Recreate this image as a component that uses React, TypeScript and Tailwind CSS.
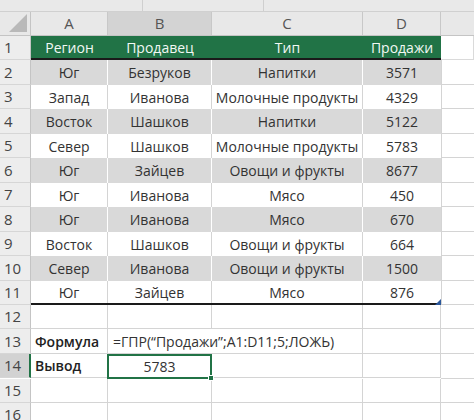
import React from 'react';

const COLS = [77, 104, 151, 78];
const ROW_H = [24, 25, 24, 25, 24, 25, 24, 25, 24, 25, 24, 24, 25, 24, 24, 24];

const DATA: string[][] = [
  ['Юг', 'Безруков', 'Напитки', '3571'],
  ['Запад', 'Иванова', 'Молочные продукты', '4329'],
  ['Восток', 'Шашков', 'Напитки', '5122'],
  ['Север', 'Шашков', 'Молочные продукты', '5783'],
  ['Юг', 'Зайцев', 'Овощи и фрукты', '8677'],
  ['Юг', 'Иванова', 'Мясо', '450'],
  ['Юг', 'Иванова', 'Мясо', '670'],
  ['Восток', 'Шашков', 'Овощи и фрукты', '664'],
  ['Север', 'Иванова', 'Овощи и фрукты', '1500'],
  ['Юг', 'Зайцев', 'Мясо', '876'],
];

const HEAD = ['Регион', 'Продавец', 'Тип', 'Продажи'];

function RowHeader({ n, h, active }: { n: number; h: number; active?: boolean }) {
  return (
    <div
      className={`w-[31px] shrink-0 flex items-center pl-[4px] text-[15px] text-[#444] border-b border-[#d6d6d6] ${
        active ? 'bg-[#d2d2d2] border-r-2 border-r-[#217346]' : 'bg-[#ededed] border-r border-r-[#c4c4c4]'
      }`}
      style={{ height: h }}
    >
      {n}
    </div>
  );
}

export default function App() {
  return (
    <div className="w-[474px] h-[420px] overflow-hidden bg-white text-[#333] font-['Open_Sans','Noto_Sans',sans-serif]">
      {/* ribbon edge */}
      <div className="h-[12px] bg-[#e9e9e9] border-b border-[#d0d0d0] flex">
        <div className="w-[143px] border-r border-[#cfcfcf]" />
        <div className="w-[121px] border-r border-[#cfcfcf]" />
      </div>

      {/* column letters */}
      <div className="flex h-[24px] bg-[#e8e8e8] border-b border-[#c4c4c4]">
        <div className="w-[31px] shrink-0 relative border-r border-[#c4c4c4]">
          <div className="absolute right-[3px] bottom-[3px] w-0 h-0 border-l-[18px] border-l-transparent border-b-[18px] border-b-[#b9b9b9]" />
        </div>
        {['A', 'B', 'C', 'D'].map((c, i) => (
          <div
            key={c}
            className={`shrink-0 flex items-center justify-center text-[15px] text-[#555] border-r border-[#c8c8c8] ${
              i === 1 ? 'bg-[#d3d3d3]' : ''
            }`}
            style={{ width: COLS[i] }}
          >
            {c}
          </div>
        ))}
        <div className="flex-1" />
      </div>

      {/* header row 1 */}
      <div className="flex">
        <RowHeader n={1} h={ROW_H[0]} />
        <div className="flex bg-[#217346] border-b-2 border-[#1a1a1a] text-[14px] text-[#f2f8f4]" style={{ height: ROW_H[0] }}>
          {HEAD.map((t, i) => (
            <div key={t} className="flex items-center justify-center" style={{ width: COLS[i] }}>
              {t}
            </div>
          ))}
        </div>
        <div className="flex-1 border-r border-b border-[#dadada]" />
      </div>

      {/* data rows */}
      {DATA.map((row, r) => {
        const gray = r % 2 === 0;
        const last = r === DATA.length - 1;
        const h = ROW_H[r + 1];
        return (
          <div key={r} className="flex">
            <RowHeader n={r + 2} h={h} />
            <div
              className={`flex text-[14px] relative ${gray ? 'bg-[#d9d9d9]' : 'bg-white'} ${last ? 'border-b-2 border-[#1a1a1a]' : ''}`}
              style={{ height: h }}
            >
              {row.map((t, i) => (
                <div
                  key={i}
                  className={`flex items-center justify-center whitespace-nowrap ${
                    i < 3 ? (gray ? 'border-r border-white' : 'border-r border-[#d4d4d4]') : ''
                  }`}
                  style={{ width: COLS[i] }}
                >
                  {t}
                </div>
              ))}
              {last && (
                <div className="absolute right-0 bottom-[-2px] w-0 h-0 border-l-[6px] border-l-transparent border-b-[6px] border-b-[#2b579a]" />
              )}
            </div>
            <div className="flex-1 border-l border-b border-[#d4d4d4]" />
          </div>
        );
      })}

      {/* rows 12-16 */}
      {[12, 13, 14, 15, 16].map((n) => {
        const h = ROW_H[n - 1];
        return (
          <div key={n} className="flex">
            <RowHeader n={n} h={h} active={n === 14} />
            {COLS.map((w, i) => {
              if (n === 13 && i === 0)
                return (
                  <div key={i} className="shrink-0 flex items-center pl-[4px] border-r border-b border-[#d4d4d4] text-[14px] font-semibold text-[#222]" style={{ width: w, height: h }}>
                    Формула
                  </div>
                );
              if (n === 13 && i === 1)
                return (
                  <div key={i} className="relative shrink-0 border-b border-[#d4d4d4]" style={{ width: w, height: h }}>
                    <span className="absolute left-[5px] top-0 h-full flex items-center whitespace-nowrap text-[14px] text-[#333]">
                      =ГПР(“Продажи”;A1:D11;5;ЛОЖЬ)
                    </span>
                  </div>
                );
              if (n === 13 && i === 2)
                return <div key={i} className="shrink-0 border-r border-b border-[#d4d4d4]" style={{ width: w, height: h }} />;
              if (n === 14 && i === 0)
                return (
                  <div key={i} className="shrink-0 flex items-center pl-[4px] border-r border-b border-[#d4d4d4] text-[14px] font-semibold text-[#222]" style={{ width: w, height: h }}>
                    Вывод
                  </div>
                );
              if (n === 14 && i === 1)
                return (
                  <div key={i} className="relative shrink-0 flex items-center justify-center border-2 border-[#217346] text-[14px] text-[#333] -ml-px" style={{ width: w + 1, height: h + 1 }}>
                    5783
                    <div className="absolute right-[-4px] bottom-[-4px] w-[6px] h-[6px] bg-[#217346] border border-white" />
                  </div>
                );
              return <div key={i} className="shrink-0 border-r border-b border-[#d4d4d4]" style={{ width: w, height: h }} />;
            })}
            <div className="flex-1 border-b border-[#d4d4d4]" />
          </div>
        );
      })}
    </div>
  );
}
